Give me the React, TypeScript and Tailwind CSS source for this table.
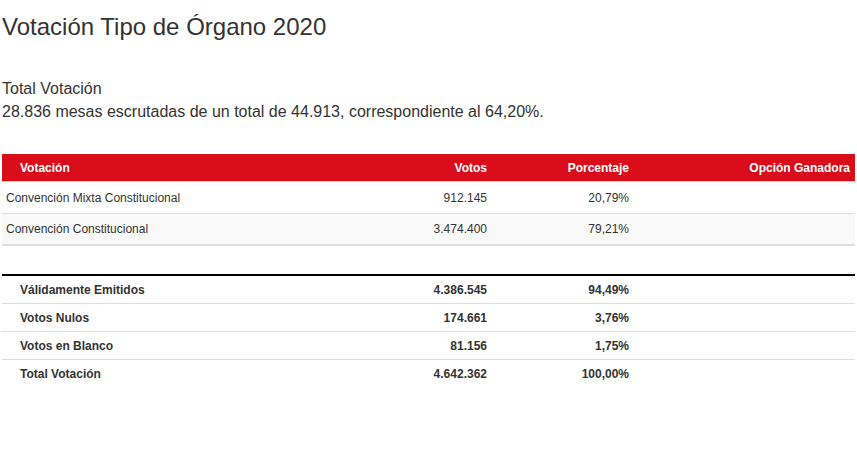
const rows = [
  { name: 'Convención Mixta Constitucional', votos: '912.145', pct: '20,79%' },
  { name: 'Convención Constitucional', votos: '3.474.400', pct: '79,21%' },
];

const totals = [
  { name: 'Válidamente Emitidos', votos: '4.386.545', pct: '94,49%' },
  { name: 'Votos Nulos', votos: '174.661', pct: '3,76%' },
  { name: 'Votos en Blanco', votos: '81.156', pct: '1,75%' },
  { name: 'Total Votación', votos: '4.642.362', pct: '100,00%' },
];

const cols = 'grid grid-cols-[350px_140px_142px_1fr]';

export default function App() {
  return (
    <div className="min-h-screen bg-white pl-[2px] pr-[2px] text-[#333] font-['Liberation_Sans',Arial,sans-serif]">
      <h1 className="pt-[12px] text-[24px] leading-[30px]">Votación Tipo de Órgano 2020</h1>

      <div className="mt-[35px] text-[16px] leading-[23px]">
        <p>Total Votación</p>
        <p>28.836 mesas escrutadas de un total de 44.913, correspondiente al 64,20%.</p>
      </div>

      <div className="mt-[31px] text-[12px]">
        <div className={`${cols} h-[28px] items-center bg-[#d90d1a] border-b border-[#f3c4c7] font-bold text-white`}>
          <div className="pl-[18px]">Votación</div>
          <div className="pr-[5px] text-right">Votos</div>
          <div className="pr-[5px] text-right">Porcentaje</div>
          <div className="pr-[5px] text-right">Opción Ganadora</div>
        </div>
        {rows.map((r, i) => (
          <div
            key={r.name}
            className={`${cols} items-center ${
              i === 0 ? 'h-[32px] border-b border-[#dddddd] bg-white' : 'h-[32px] border-b-2 border-[#dddddd] bg-[#f9f9f9]'
            }`}
          >
            <div className="pl-[4px]">{r.name}</div>
            <div className="pr-[5px] text-right">{r.votos}</div>
            <div className="pr-[5px] text-right">{r.pct}</div>
            <div />
          </div>
        ))}

        <div className="mt-[28px] border-t-2 border-black font-bold">
          {totals.map((r, i) => (
            <div
              key={r.name}
              className={`${cols} h-[28px] items-center ${i < totals.length - 1 ? 'border-b border-[#dddddd]' : ''}`}
            >
              <div className="pl-[18px]">{r.name}</div>
              <div className="pr-[5px] text-right">{r.votos}</div>
              <div className="pr-[5px] text-right">{r.pct}</div>
              <div />
            </div>
          ))}
        </div>
      </div>
    </div>
  );
}
